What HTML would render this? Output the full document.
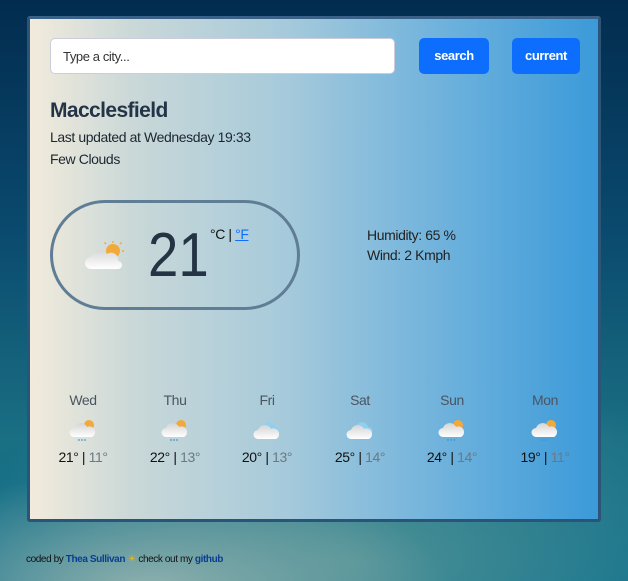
<!DOCTYPE html>
<html><head><meta charset="utf-8"><style>
*{margin:0;padding:0;box-sizing:border-box}
body{width:628px;height:581px;overflow:hidden;font-family:"Liberation Sans",sans-serif;letter-spacing:-0.4px;
background:radial-gradient(ellipse 300px 120px at 150px 590px,#8fb0ad 0%,rgba(100,150,150,0) 100%),
radial-gradient(ellipse 400px 200px at 350px 560px,#4d9196 0%,rgba(60,130,140,0) 100%),
linear-gradient(180deg,#022c4f 0%,#0a4a6e 40%,#1a6f83 75%,#0c6f8c 100%);position:relative}
.card{position:absolute;left:27px;top:16px;width:574px;height:506px;border:3px solid #2b5479;border-top-color:#3a6288;border-radius:3px;
background:linear-gradient(90deg,#f2ebdc 0%,#cad8d8 18%,#a6cadb 45%,#6ab0dc 75%,#3b9ad9 100%)}
.in{position:absolute;left:20px;top:19px;width:345px;height:36px;background:#fff;border:1px solid #ccd;border-radius:5px;font-size:13px;color:#333;padding:10px 12px}
.btn{position:absolute;top:19px;height:36px;background:#0d6efd;color:#fff;border-radius:5px;font-size:13px;font-weight:bold;text-align:center;line-height:36px}
h1{position:absolute;left:20px;top:80px;font-size:21px;color:#243447;font-weight:bold;letter-spacing:-0.6px}
.t{position:absolute;left:20px;font-size:14px;color:#1d2731}
.pill{position:absolute;left:20px;top:181px;width:250px;height:110px;border:3px solid #5f7d95;border-radius:55px}
.big{position:absolute;left:95px;top:17px;font-size:62px;color:#253444;font-weight:normal;transform:scaleX(0.88);transform-origin:left;letter-spacing:0}
.unit{position:absolute;left:157px;top:23px;font-size:14px;color:#111}
.unit a{color:#0d6efd;text-decoration:underline}
.day{position:absolute;top:392px;width:80px;text-align:center;color:#4a5560;font-size:14px}
.day svg{display:block;margin:10px auto 7px}
.day .tp{color:#111;font-size:14px}
.day .tp span{color:#6e7880}
.foot{position:absolute;left:26px;top:554px;font-size:10px;color:#111}
.foot b{color:#0a3d91}
</style></head><body>
<div class="card">
<div class="in">Type a city...</div>
<div class="btn" style="left:389px;width:70px">search</div>
<div class="btn" style="left:482px;width:68px">current</div>
<h1>Macclesfield</h1>
<div class="t" style="top:110px">Last updated at Wednesday 19:33</div>
<div class="t" style="top:132px">Few Clouds</div>
<div class="pill">
<svg style="position:absolute;left:32px;top:38px" width="42" height="30" viewBox="0 0 42 30"><defs><linearGradient id="cg" x1="0" y1="0" x2="0" y2="1"><stop offset="0" stop-color="#d8d8d8"/><stop offset="1" stop-color="#fff"/></linearGradient></defs><circle cx="28" cy="10" r="7" fill="#f2a93b"/><g stroke="#f2a93b" stroke-width="1.5"><line x1="28" y1="0" x2="28" y2="2"/><line x1="37" y1="10" x2="39" y2="10"/><line x1="35" y1="3" x2="36.5" y2="1.5"/><line x1="21" y1="3" x2="19.5" y2="1.5"/></g><path d="M6 28 A6 6 0 0 1 6 16 A9 9 0 0 1 22 13 A7 7 0 0 1 33 20 A4 4 0 0 1 33 28Z" fill="url(#cg)"/></svg>
<div class="big">21</div>
<div class="unit">°C | <a>°F</a></div>
</div>
<div class="t" style="left:337px;top:208px;color:#222">Humidity: 65 %</div>
<div class="t" style="left:337px;top:228px;color:#222">Wind: 2 Kmph</div>
</div>
<svg width="0" height="0" style="position:absolute"><defs>
<linearGradient id="g2" x1="0" y1="0" x2="0" y2="1"><stop offset="0" stop-color="#d5d5d5"/><stop offset="1" stop-color="#fff"/></linearGradient>
<g id="rain"><circle cx="20" cy="7" r="5" fill="#f2a93b"/><path d="M5 19 A4.5 4.5 0 0 1 5 10 A7 7 0 0 1 18 9 A5 5 0 0 1 23 19Z" fill="url(#g2)"/><g fill="#3a9ad9"><circle cx="10" cy="22" r=".9"/><circle cx="13" cy="22" r=".9"/><circle cx="16" cy="22" r=".9"/></g></g>
<g id="cl"><path d="M10 12 A6 6 0 0 1 22 9 A4 4 0 0 1 25 16Z" fill="#8fd0f0"/><path d="M5 21 A4.5 4.5 0 0 1 5 12 A7 7 0 0 1 18 11 A5 5 0 0 1 23 21Z" fill="url(#g2)"/></g>
</defs></svg>
<div class="day" style="left:43px">Wed<svg width="28" height="24" viewBox="0 0 28 24"><use href="#rain"/></svg><div class="tp">21° | <span>11°</span></div></div>
<div class="day" style="left:135px">Thu<svg width="28" height="24" viewBox="0 0 28 24"><use href="#rain"/></svg><div class="tp">22° | <span>13°</span></div></div>
<div class="day" style="left:227px">Fri<svg width="28" height="24" viewBox="0 0 28 24"><use href="#cl"/></svg><div class="tp">20° | <span>13°</span></div></div>
<div class="day" style="left:320px">Sat<svg width="28" height="24" viewBox="0 0 28 24"><use href="#cl"/></svg><div class="tp">25° | <span>14°</span></div></div>
<div class="day" style="left:412px">Sun<svg width="28" height="24" viewBox="0 0 28 24"><use href="#rain"/></svg><div class="tp">24° | <span>14°</span></div></div>
<div class="day" style="left:505px">Mon<svg width="28" height="24" viewBox="0 0 28 24"><use href="#rain"/></svg><div class="tp">19° | <span>11°</span></div></div>
<div class="foot">coded by <b>Thea Sullivan</b> <span style="color:#f5b400">☀</span> check out my <b>github</b></div>
</body></html>
